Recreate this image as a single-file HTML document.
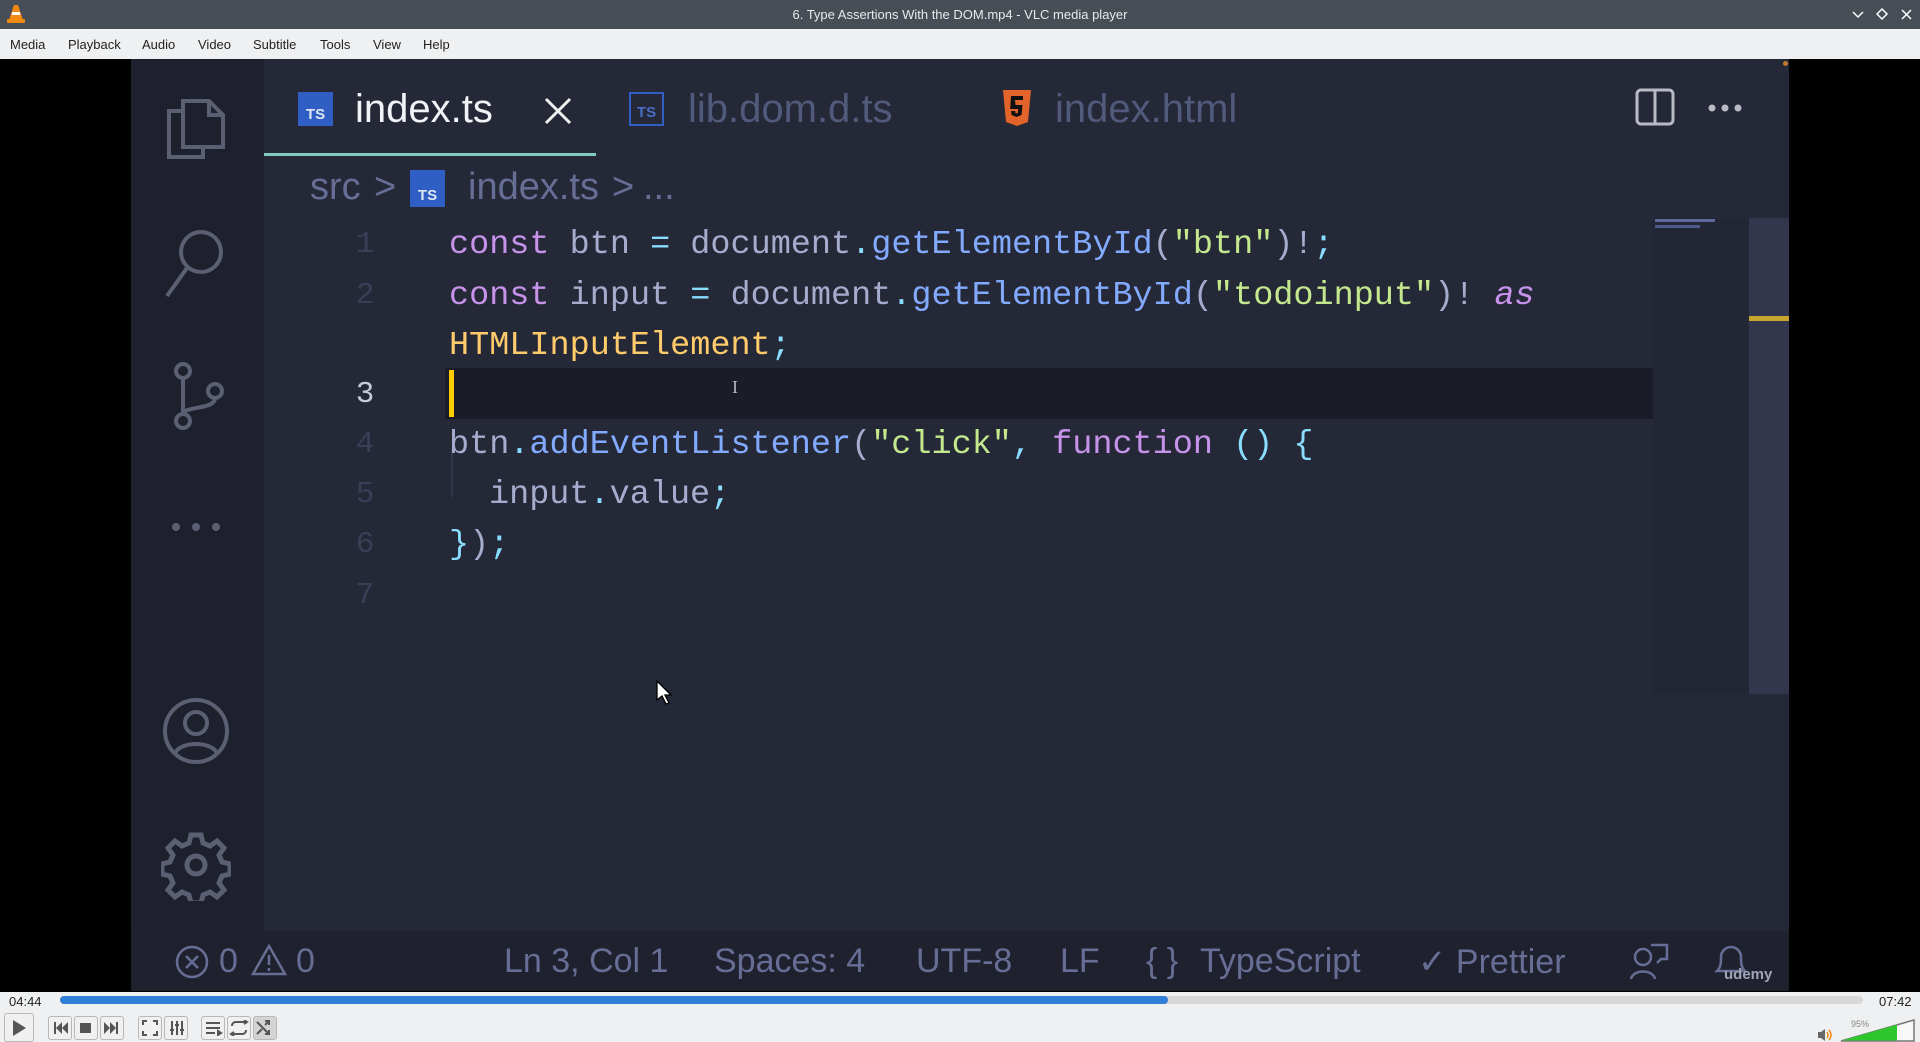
<!DOCTYPE html>
<html><head><meta charset="utf-8"><style>
*{margin:0;padding:0;box-sizing:border-box}
body{width:1920px;height:1042px;overflow:hidden;background:#000;font-family:"Liberation Sans",sans-serif;position:relative}
.a{position:absolute;white-space:nowrap}
#title{left:0;top:0;width:1920px;height:29px;background:#474e56}
#menu{left:0;top:29px;width:1920px;height:30px;background:#eff0f1;font-size:13px;color:#222}
#menu span{position:absolute;top:8px}
#vid{left:131px;top:59px;width:1658px;height:932px;background:#252837}
#act{left:0;top:0;width:133px;height:872px;background:#1e202d}
#status{left:0;top:872px;width:1658px;height:60px;background:#1f212e;color:#676e95;font-size:34px;font-family:"Liberation Sans",sans-serif}
.code{font-family:"Liberation Mono",monospace;font-size:33.5px;color:#a6accd}
.k{color:#c792ea}.m{color:#82aaff}.p{color:#89ddff}.s{color:#c3e88d}.t{color:#ffcb6b}
.ln{font-family:"Liberation Mono",monospace;font-size:31px;color:#3a3f58;width:40px;text-align:center}
.ts{width:35px;height:34px;background:#2f5fc4;color:#dfe6f5;font-size:15px;font-weight:bold;display:flex;align-items:flex-end;justify-content:center;padding-bottom:3px}
.tab{font-size:40px;line-height:46px;top:27px}
.bc{font-size:38px;color:#676e95;line-height:38px;top:109px}
#ctrl{left:0;top:992px;width:1920px;height:50px;background:#eff0f1}
.b{position:absolute;top:1016px;width:24px;height:24px;border:1px solid #b8b8b8;border-radius:3px;background:#f0f0f0}
</style></head><body>
<div id="title" class="a">
<svg class="a" style="left:6px;top:4px" width="20" height="20" viewBox="0 0 20 20"><path d="M8 1h4l5 15H3z" fill="#f08a12"/><path d="M6.5 8h7l1 3h-9z M5.3 12h9.4" fill="#fff"/><rect x="1" y="15" width="18" height="4" rx="1" fill="#f08a12"/></svg>
<div class="a" style="left:0;width:1920px;text-align:center;top:7px;color:#e8eaec;font-size:13px">6. Type Assertions With the DOM.mp4 - VLC media player</div>
<svg class="a" style="left:1850px;top:6px" width="70" height="18" viewBox="0 0 70 18" stroke="#fff" stroke-width="1.5" fill="none"><path d="M3 6l5 5 5-5"/><path d="M32 3l5 5-5 5-5-5z"/><path d="M52 4l9 9M61 4l-9 9"/></svg>
</div>
<div id="menu" class="a"><span style="left:10px">Media</span><span style="left:68px">Playback</span><span style="left:142px">Audio</span><span style="left:198px">Video</span><span style="left:253px">Subtitle</span><span style="left:320px">Tools</span><span style="left:373px">View</span><span style="left:423px">Help</span></div>

<div id="vid" class="a">
 <div id="act" class="a">
  <svg class="a" style="left:30px;top:30px" width="70" height="75" viewBox="0 0 70 75" fill="none" stroke="#5b5f72" stroke-width="4"><path d="M22 12h26l14 14v32H22z"/><path d="M48 12v14h14"/><path d="M22 22H8v46h34V58"/></svg>
  <svg class="a" style="left:30px;top:165px" width="70" height="80" viewBox="0 0 70 80" fill="none" stroke="#5b5f72" stroke-width="4"><circle cx="40" cy="28" r="20"/><path d="M26 44L6 72"/></svg>
  <svg class="a" style="left:30px;top:298px" width="70" height="80" viewBox="0 0 70 80" fill="none" stroke="#5b5f72" stroke-width="4"><circle cx="22" cy="14" r="7"/><circle cx="22" cy="64" r="7"/><circle cx="54" cy="34" r="7"/><path d="M22 21v36M54 41c0 12-32 8-32 16"/></svg>
  <svg class="a" style="left:30px;top:460px" width="70" height="20"><circle cx="15" cy="8" r="4" fill="#5b5f72"/><circle cx="35" cy="8" r="4" fill="#5b5f72"/><circle cx="55" cy="8" r="4" fill="#5b5f72"/></svg>
  <svg class="a" style="left:30px;top:636px" width="70" height="72" viewBox="0 0 70 72" fill="none" stroke="#5b5f72" stroke-width="4"><circle cx="35" cy="36" r="31"/><circle cx="35" cy="28" r="11"/><path d="M14 58c6-12 36-12 42 0"/></svg>
  <svg class="a" style="left:30px;top:770px" width="70" height="72" viewBox="-35 -36 70 72" fill="none" stroke="#5b5f72" stroke-width="5"><path d="M-5-30h10l2 8 7 3 7-5 7 7-5 7 3 7 8 2v10l-8 2-3 7 5 7-7 7-7-5-7 3-2 8h-10l-2-8-7-3-7 5-7-7 5-7-3-7-8-2v-10l8-2 3-7-5-7 7-7 7 5 7-3z"/><circle r="9"/></svg>
 </div>
 <div class="a ts" style="left:167px;top:33px">TS</div>
 <div class="a tab" style="left:224px;color:#f2f3f7">index.ts</div>
 <svg class="a" style="left:412px;top:37px" width="30" height="30" stroke="#f0f0f0" stroke-width="3"><path d="M3 3l24 24M27 3L3 27"/></svg>
 <div class="a ts" style="left:498px;top:33px;background:none;border:2px solid #2f5fc4;color:#4a6ec4">TS</div>
 <div class="a tab" style="left:557px;color:#525a7c">lib.dom.d.ts</div>
 <svg class="a" style="left:871px;top:30px" width="30" height="38" viewBox="0 0 30 38"><path d="M1 1h28l-3 32-11 4-11-4z" fill="#e2642a"/><path d="M9 7h12v4h-8l.5 5h7l-1 10-5 2-5-2-.3-4h4l.2 2 1.2.4 1.2-.4.4-4h-8z" fill="#111"/></svg>
 <div class="a tab" style="left:924px;color:#525a7c">index.html</div>
 <svg class="a" style="left:1504px;top:29px" width="40" height="38" fill="none" stroke="#b8bac4" stroke-width="3"><rect x="2" y="2" width="36" height="34" rx="4"/><path d="M20 2v34"/></svg>
 <svg class="a" style="left:1575px;top:43px" width="38" height="12"><circle cx="6" cy="6" r="3.5" fill="#b8bac4"/><circle cx="19" cy="6" r="3.5" fill="#b8bac4"/><circle cx="32" cy="6" r="3.5" fill="#b8bac4"/></svg>
 <div class="a" style="left:133px;top:94px;width:332px;height:3px;background:#80cbc4"></div>
 <div class="a bc" style="left:179px">src</div>
 <div class="a bc" style="left:243px">&gt;</div>
 <div class="a ts" style="left:279px;top:111px;width:35px;height:37px">TS</div>
 <div class="a bc" style="left:337px">index.ts</div>
 <div class="a bc" style="left:481px">&gt;</div>
 <div class="a bc" style="left:512px">...</div>

 <div class="a" style="left:314px;top:309px;width:1334px;height:51px;background:#1b1c27"></div>
 <div class="a" style="left:318px;top:311px;width:5px;height:47px;background:#ffcc00"></div>
 <div class="a" style="left:320px;top:390px;width:2px;height:48px;background:#32364a"></div>
 <div class="a" style="left:601px;top:318px;color:#b4b6c0;font-family:'Liberation Serif',serif;font-size:18px">I</div>
 <svg class="a" style="left:523px;top:620px" width="20" height="26"><path d="M3 2v19l5-4 4 8 3-1-4-8h6z" fill="#fff" stroke="#000" stroke-width="1.3"/></svg>

 <div class="a ln" style="left:214px;top:168px">1</div>
 <div class="a ln" style="left:214px;top:219px">2</div>
 <div class="a ln" style="left:214px;top:318px;color:#c4c8d8">3</div>
 <div class="a ln" style="left:214px;top:368px">4</div>
 <div class="a ln" style="left:214px;top:418px">5</div>
 <div class="a ln" style="left:214px;top:468px">6</div>
 <div class="a ln" style="left:214px;top:519px">7</div>

 <div class="a code" style="left:318px;top:167px"><span class="k">const</span> btn <span class="p">=</span> document<span class="p">.</span><span class="m">getElementById</span>(<span class="s">"btn"</span>)!<span class="p">;</span></div>
 <div class="a code" style="left:318px;top:218px"><span class="k">const</span> input <span class="p">=</span> document<span class="p">.</span><span class="m">getElementById</span>(<span class="s">"todoinput"</span>)! <span class="k" style="font-style:italic">as</span></div>
 <div class="a code" style="left:318px;top:268px"><span class="t">HTMLInputElement</span><span class="p">;</span></div>
 <div class="a code" style="left:318px;top:367px">btn<span class="p">.</span><span class="m">addEventListener</span>(<span class="s">"click"</span><span class="p">,</span> <span class="k">function</span> <span class="p">() {</span></div>
 <div class="a code" style="left:358px;top:417px">input<span class="p">.</span>value<span class="p">;</span></div>
 <div class="a code" style="left:318px;top:467px"><span class="p">}</span>)<span class="p">;</span></div>

 <div class="a" style="left:1522px;top:159px;width:96px;height:476px;background:#232635"></div>
 <div class="a" style="left:1524px;top:160px;width:60px;height:3px;background:#5b6a99"></div>
 <div class="a" style="left:1524px;top:166px;width:45px;height:3px;background:#4b5a89"></div>
 <div class="a" style="left:1618px;top:159px;width:40px;height:476px;background:#33374d"></div>
 <div class="a" style="left:1618px;top:257px;width:40px;height:5px;background:#c9a62d"></div>
 <div class="a" style="left:1652px;top:2px;width:5px;height:5px;border-radius:50%;background:#c07a2a"></div>

 <div id="status" class="a">
  <svg class="a" style="left:44px;top:14px" width="34" height="34" fill="none" stroke="#676e95" stroke-width="2.5"><circle cx="17" cy="17" r="15"/><path d="M11 11l12 12M23 11L11 23"/></svg>
  <div class="a" style="left:88px;top:11px">0</div>
  <svg class="a" style="left:120px;top:12px" width="36" height="34" fill="none" stroke="#676e95" stroke-width="2.5"><path d="M18 3L34 31H2z"/><path d="M18 12v10M18 25v3"/></svg>
  <div class="a" style="left:165px;top:11px">0</div>
  <div class="a" style="left:373px;top:11px">Ln 3, Col 1</div>
  <div class="a" style="left:583px;top:11px">Spaces: 4</div>
  <div class="a" style="left:785px;top:11px">UTF-8</div>
  <div class="a" style="left:929px;top:11px">LF</div>
  <div class="a" style="left:1015px;top:11px">{ }</div>
  <div class="a" style="left:1069px;top:11px">TypeScript</div>
  <div class="a" style="left:1287px;top:11px">✓ Prettier</div>
  <svg class="a" style="left:1498px;top:12px" width="40" height="38" fill="none" stroke="#676e95" stroke-width="2.5"><circle cx="14" cy="14" r="8"/><path d="M2 36c2-10 22-10 24 0M22 2h16v14h-6l-4 4"/></svg>
  <svg class="a" style="left:1580px;top:12px" width="40" height="38" fill="none" stroke="#676e95" stroke-width="2.5"><path d="M6 28c4-4 4-8 4-14a10 10 0 0 1 20 0c0 6 0 10 4 14z"/></svg>
  <div class="a" style="left:1593px;top:35px;font-size:15px;color:#a0a4b8;font-weight:bold">udemy</div>
 </div>
</div>

<div id="ctrl" class="a"></div>
<div class="a" style="left:9px;top:994px;font-size:13px;color:#222">04:44</div>
<div class="a" style="left:60px;top:996px;width:1803px;height:8px;border-radius:4px;background:#d8d8d8"></div>
<div class="a" style="left:60px;top:996px;width:1108px;height:8px;border-radius:4px;background:#2f7fd6"></div>
<div class="a" style="left:1879px;top:994px;font-size:13px;color:#222">07:42</div>
<div class="b" style="left:4px;top:1013px;width:30px;height:29px"></div>
<svg class="a" style="left:10px;top:1019px" width="18" height="18"><path d="M3 1l13 8-13 8z" fill="#555"/></svg>
<div class="b" style="left:48px"></div><div class="b" style="left:74px"></div><div class="b" style="left:100px"></div>
<svg class="a" style="left:52px;top:1021px" width="72" height="14" fill="#555"><path d="M2 1h2v12H2zM4 7l6-6v12zM10 7l6-6v12z"/><rect x="28" y="2" width="11" height="10"/><path d="M52 1v12l6-6zM58 1v12l6-6zM64 1h2v12h-2z"/></svg>
<div class="b" style="left:138px"></div><div class="b" style="left:164px"></div>
<svg class="a" style="left:142px;top:1020px" width="44" height="16" fill="none" stroke="#555" stroke-width="2"><path d="M1 5V1h4M11 1h4v4M15 11v4h-4M5 15H1v-4"/><path d="M30 1v14M35 1v14M40 1v14" /><path d="M28 10h4M33 5h4M38 10h4"/></svg>
<div class="b" style="left:201px"></div><div class="b" style="left:227px"></div><div class="b" style="left:253px;background:#d4d4d4"></div>
<svg class="a" style="left:205px;top:1020px" width="70" height="16" fill="none" stroke="#555" stroke-width="2"><path d="M1 3h14M1 8h14M1 13h9"/><path d="M13 11l3 2-3 2z" fill="#555"/><path d="M27 6c0-3 2-4 4-4h10M39 0l3 2-3 2M41 10c0 3-2 4-4 4H27M29 12l-3 2 3 2"/><path d="M52 2l12 12M52 14l5-5M60 5l4-4M60 1h4v4M60 14h4v-4"/></svg>
<svg class="a" style="left:1817px;top:1028px" width="16" height="14"><path d="M1 4h3l4-3v12l-4-3H1z" fill="#666"/><path d="M10 4q2 3 0 6M12 2q4 5 0 10" stroke="#f08a12" stroke-width="1.5" fill="none"/></svg>
<div class="a" style="left:1851px;top:1019px;font-size:9px;color:#888">95%</div>
<svg class="a" style="left:1840px;top:1019px" width="75" height="23"><path d="M1 22L74 1v21z" fill="#f8f8f8" stroke="#777" stroke-width="1.5"/><path d="M2 21.5L57 5.7V21.5z" fill="#2dc62d"/></svg>
</body></html>
